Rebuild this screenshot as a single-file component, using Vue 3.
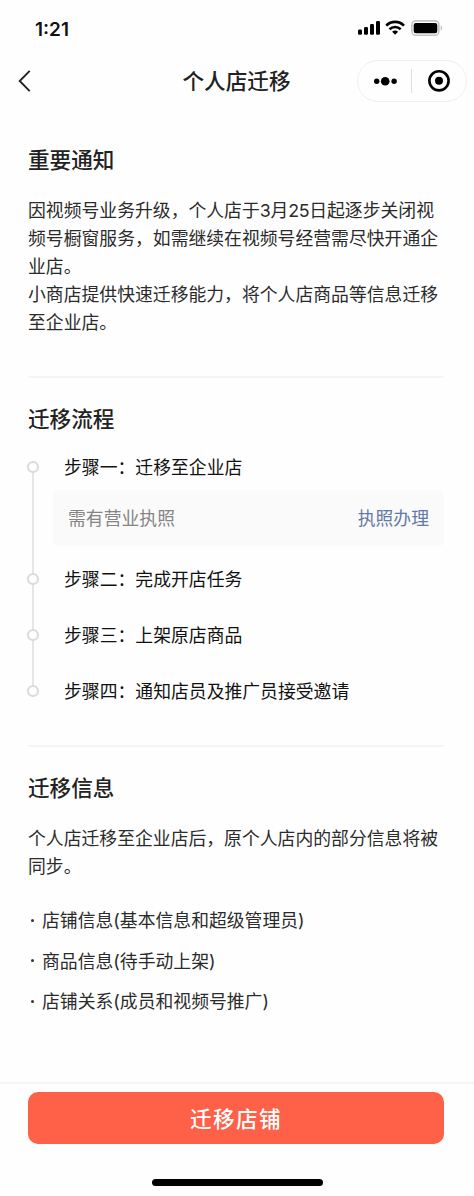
<script setup>
const steps = [
  { name: '步骤一', text: '迁移至企业店', note: '需有营业执照', link: '执照办理' },
  { name: '步骤二', text: '完成开店任务' },
  { name: '步骤三', text: '上架原店商品' },
  { name: '步骤四', text: '通知店员及推广员接受邀请' },
]
const items = [
  '店铺信息(基本信息和超级管理员)',
  '商品信息(待手动上架)',
  '店铺关系(成员和视频号推广)',
]
</script>

<template>
  <div class="page">
    <div class="status">
      <span class="time">1:21</span>
      <svg class="indicators" width="86" height="20" viewBox="0 0 86 20">
        <rect x="1" y="11.4" width="4" height="5.4" rx="1.3" />
        <rect x="7" y="9" width="4" height="7.8" rx="1.3" />
        <rect x="13" y="6" width="4" height="10.8" rx="1.3" />
        <rect x="19" y="3" width="4" height="13.8" rx="1.3" />
        <g fill="none" stroke="#000" stroke-width="2.6">
          <path d="M29.2 7.6a12.5 12.5 0 0 1 17.8 0" />
          <path d="M32.5 11.3a8 8 0 0 1 11.2 0" />
        </g>
        <path d="M38.1 16.8l-3-3.1a4.2 4.2 0 0 1 6 0z" />
        <rect x="54.9" y="2.9" width="27" height="14.4" rx="4" fill="#fff" stroke="#c4c4c4" stroke-width="1.6" />
        <rect x="56.7" y="5" width="23.6" height="10.2" rx="2.2" />
        <path d="M83.6 7.6c2.2.8 2.2 4.2 0 5z" fill="#c4c4c4" />
      </svg>
    </div>

    <header class="nav">
      <svg class="back" width="14" height="24" viewBox="0 0 14 24" fill="none" stroke="#222" stroke-width="1.9">
        <path d="M12.7 1.8L2.7 12l10 10.2" />
      </svg>
      <h1>个人店迁移</h1>
      <div class="capsule">
        <svg width="110" height="42" viewBox="0 0 110 42">
          <circle cx="19.7" cy="21.2" r="2.7" />
          <circle cx="28.2" cy="21.2" r="4.3" />
          <circle cx="37.1" cy="21.2" r="2.7" />
          <path d="M54.5 9v24" stroke="#dedede" />
          <circle cx="82" cy="20.8" r="9.6" fill="none" stroke="#000" stroke-width="2.6" />
          <circle cx="82" cy="20.8" r="4" />
        </svg>
      </div>
    </header>

    <main>
      <section class="notice">
        <h2>重要通知</h2>
        <p>因视频号业务升级，个人店于<span class="num">3</span>月<span class="num">25</span>日起逐步关闭视<br>频号橱窗服务，如需继续在视频号经营需尽快开通企<br>业店。</p>
        <p>小商店提供快速迁移能力，将个人店商品等信息迁移<br>至企业店。</p>
      </section>

      <section class="flow">
        <h2>迁移流程</h2>
        <ol>
          <li v-for="s in steps" :key="s.name">
            <div class="rail"><i></i></div>
            <div class="body">
              <div class="label">{{ s.name }}：{{ s.text }}</div>
              <div v-if="s.note" class="note">
                <span>{{ s.note }}</span>
                <a>{{ s.link }}</a>
              </div>
            </div>
          </li>
        </ol>
      </section>

      <section class="info">
        <h2>迁移信息</h2>
        <p>个人店迁移至企业店后，原个人店内的部分信息将被<br>同步。</p>
        <ul>
          <li v-for="t in items" :key="t"><i></i>{{ t }}</li>
        </ul>
      </section>
    </main>

    <footer>
      <button>迁移店铺</button>
      <div class="home"></div>
    </footer>
  </div>
</template>

<style>
body {
  margin: 0;
  background: #fff;
}
</style>

<style scoped>
.page {
  width: 474px;
  height: 1196px;
  display: flex;
  flex-direction: column;
  overflow: hidden;
  background: #fefefe;
  color: #2b2b2b;
  font-family: Inter, "Noto Sans CJK SC", sans-serif;
  font-size: 17.83px;
  line-height: 28px;
}
h1, h2, p, ol, ul {
  margin: 0;
  padding: 0;
  list-style: none;
}
.status {
  height: 60px;
  box-sizing: border-box;
  padding: 18px 31px 0 35px;
  display: flex;
  justify-content: space-between;
  align-items: flex-start;
}
.time {
  padding-top: 1px;
  font: 600 19px/22px Inter, sans-serif;
  color: #111;
}
.num {
  letter-spacing: -0.4px;
}
.nav {
  height: 42px;
  flex: none;
  display: grid;
  grid-template-columns: 1fr auto 1fr;
  align-items: center;
  padding: 0 7px 0 17px;
}
h1 {
  font-size: 21.6px;
  font-weight: 500;
  color: #222;
  padding: 0 11px 1px 0;
}
.capsule {
  justify-self: end;
  width: 110px;
  height: 42px;
  box-sizing: border-box;
  border: 1px solid #efefef;
  border-radius: 21px;
}
.capsule svg {
  display: block;
  margin: -1px;
}
main {
  flex: 1;
  padding: 0 30px 0 28px;
}
h2 {
  font-size: 21.6px;
  line-height: 32px;
  font-weight: 500;
  color: #222;
}
section {
  box-sizing: border-box;
}
.notice {
  height: 276px;
  padding-top: 42px;
  border-bottom: 2px solid #f5f5f5;
}
.notice h2 {
  margin-bottom: 21px;
}
.flow {
  height: 369px;
  padding-top: 25px;
  border-bottom: 2px solid #f5f5f5;
}
.flow h2 {
  margin-bottom: 18px;
}
.flow li {
  display: flex;
  height: 56px;
}
.flow li:first-child {
  height: 112px;
}
.rail {
  width: 10px;
  flex: none;
  display: flex;
  flex-direction: column;
  align-items: center;
  padding-top: 8px;
}
.rail i {
  width: 12px;
  height: 12px;
  box-sizing: border-box;
  border: 2px solid #d9d9d9;
  border-radius: 50%;
  flex: none;
}
.rail::after {
  content: "";
  width: 2px;
  flex: 1;
  margin-bottom: -8px;
  background: #e6e6e6;
}
.flow li:last-child .rail::after {
  display: none;
}
.body {
  flex: 1;
  padding-left: 15px;
}
.label {
  padding: 1px 0 0 11px;
  color: #111;
}
.note {
  margin-top: 8px;
  height: 56px;
  box-sizing: border-box;
  padding: 2px 15px 0;
  display: flex;
  align-items: center;
  justify-content: space-between;
  border-radius: 5px;
  background: #fafafa;
  color: #858585;
}
.note a {
  color: #6478a5;
}
.info {
  padding-top: 25px;
}
.info h2 {
  margin-bottom: 21px;
}
.info ul {
  padding-top: 26px;
}
.info li {
  display: flex;
  align-items: center;
  margin-bottom: 12.5px;
}
.info li i {
  width: 3px;
  height: 3px;
  margin: 0 8px 2px 3px;
  border-radius: 50%;
  background: #333;
}
footer {
  height: 114px;
  flex: none;
  box-sizing: border-box;
  border-top: 2px solid #f5f5f5;
  padding: 8px 30px 0 28px;
}
button {
  display: block;
  width: 100%;
  height: 52px;
  border: 0;
  border-radius: 10px;
  background: #ff6048;
  color: #fff;
  font: 500 21.6px/52px "Noto Sans CJK SC", sans-serif;
  letter-spacing: 1.4px;
  padding: 0;
}
.home {
  width: 171px;
  height: 7px;
  margin: 35px 121px 0 auto;
  border-radius: 4px;
  background: #000;
}
</style>
